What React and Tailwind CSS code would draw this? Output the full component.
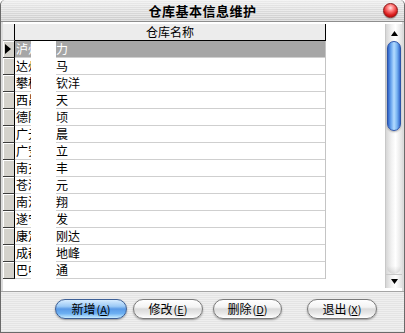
const rows = [
  ["泸州", "力"],
  ["达州", "马"],
  ["攀枝", "钦洋"],
  ["西昌", "天"],
  ["德阳", "顷"],
  ["广元", "晨"],
  ["广安", "立"],
  ["南充", "丰"],
  ["苍溪", "元"],
  ["南江", "翔"],
  ["遂宁", "发"],
  ["康定", "刚达"],
  ["成都", "地峰"],
  ["巴中", "通"],
];

function Btn({ label, k, blue, cls }) {
  return (
    <div
      className={
        "h-[20px] rounded-full border flex items-center justify-center text-[12px] leading-none text-black shadow-[0_1px_2px_rgba(0,0,0,0.35)] " +
        (blue
          ? "border-[#3d5f95] [background:linear-gradient(to_bottom,#d6ecff_0%,#9ccaf6_35%,#5a9ae6_50%,#6db0f2_75%,#c8ecff_100%)] "
          : "border-[#7a7a7a] [background:linear-gradient(to_bottom,#ffffff_0%,#f3f3f3_40%,#dadada_50%,#e9e9e9_75%,#ffffff_100%)] ") +
        cls
      }
    >
      <span>{label}</span>
      <span className="text-[11px] ml-[1px]">
        (<span className="underline">{k}</span>)
      </span>
    </div>
  );
}

export default function App() {
  return (
    <div className="w-[405px] h-[333px] overflow-hidden flex flex-col bg-[#e4e4e4] border-x border-b border-[#6a6a6a] rounded-t-[5px] [font-family:'Noto_Sans_CJK_SC','Noto_Sans',sans-serif]">
      {/* Title bar */}
      <div className="h-[22px] shrink-0 grid grid-cols-[1fr_auto_1fr] items-center border-b border-[#8e8e8e] rounded-t-[5px] [background:repeating-linear-gradient(to_bottom,rgba(255,255,255,0.45)_0px,rgba(255,255,255,0.45)_1px,transparent_1px,transparent_2px),linear-gradient(to_bottom,#ececec,#cbcbcb)]">
        <div />
        <div className="text-[13px] font-bold text-black leading-none tracking-[0.5px]">仓库基本信息维护</div>
        <div className="justify-self-end pr-[6px] flex items-center">
          <div className="w-[15px] h-[15px] rounded-full border border-[#8a1a1a] [background:radial-gradient(circle_at_50%_30%,#ffe0e0_0%,#ff7a7a_30%,#d81c1c_65%,#a00000_100%)] shadow-[0_1px_1px_rgba(0,0,0,0.3)]" />
        </div>
      </div>

      {/* Content */}
      <div className="h-[269px] shrink-0 flex">
        <div className="w-[2px] bg-[#dcdcdc]" />
        <div className="flex-1 bg-white flex flex-col pt-[2px]">
          {/* header */}
          <div className="h-[17px] flex shrink-0">
            <div className="w-[12px] border-r border-black bg-[#ececec] border-b border-b-[#9a9a9a]" />
            <div className="w-[311px] border-r border-black border-b bg-[#ececec] flex items-center justify-center text-[12px] leading-none text-black">
              仓库名称
            </div>
          </div>
          {rows.map((r, i) => {
            const sel = i === 0;
            return (
              <div key={i} className="h-[17px] flex shrink-0">
                <div className="w-[12px] border-r border-black border-b border-b-[#3c3c3c] bg-[#d4d2cc] shadow-[inset_1px_1px_0_#ffffff] flex items-center pl-[2px]">
                  {sel && (
                    <svg width="6" height="10" viewBox="0 0 6 10">
                      <path d="M0 0 L6 5 L0 10 Z" fill="#000" />
                    </svg>
                  )}
                </div>
                <div className="w-[311px] border-r border-[#c4c4c4] flex text-[12px] leading-none">
                  <div
                    className={
                      "w-[16px] overflow-hidden whitespace-nowrap pl-[1px] border-b border-[#cfcfcf] flex items-center " +
                      (sel ? "bg-[#a6a6a6] text-white" : "text-black")
                    }
                  >
                    {r[0]}
                  </div>
                  <div className="w-[25px] bg-white" />
                  <div
                    className={
                      "flex-1 whitespace-nowrap border-b border-[#cfcfcf] flex items-center " +
                      (sel ? "bg-[#a6a6a6] text-white" : "text-black")
                    }
                  >
                    {r[1]}
                  </div>
                </div>
              </div>
            );
          })}
          <div className="flex-1" />
        </div>
        {/* scrollbar */}
        <div className="w-[17px] flex flex-col pt-[2px] pb-[3px] bg-white">
          <div className="flex-1 flex flex-col border-l border-[#c8c8c8] [background:linear-gradient(to_right,#d6d6d6,#f2f2f2_35%,#ffffff_60%,#e2e2e2)]">
            <div className="h-[17px] flex items-center justify-center pt-[2px]">
              <svg width="7" height="5" viewBox="0 0 7 5">
                <path d="M3.5 0 L7 5 L0 5 Z" fill="#000" />
              </svg>
            </div>
            <div className="h-[90px] mx-[1px] rounded-full border border-[#2c54a8] [background:linear-gradient(to_right,#2f63c8,#6aa6ee_25%,#b4dcff_50%,#78b4f2_75%,#3468cc)] shadow-[0_1px_2px_rgba(0,0,0,0.3)]" />
            <div className="flex-1" />
            <div className="h-[8px] mx-[1px] rounded-b-full [background:linear-gradient(to_bottom,rgba(0,0,0,0),rgba(0,0,0,0.12))]" />
            <div className="h-[14px] flex items-center justify-center border-t border-[#c8c8c8]">
              <svg width="7" height="5" viewBox="0 0 7 5">
                <path d="M0 0 L7 0 L3.5 5 Z" fill="#000" />
              </svg>
            </div>
          </div>
        </div>
        <div className="w-[2px] bg-[#dcdcdc]" />
      </div>

      {/* Button panel */}
      <div className="flex-1 border-t border-[#a4a4a4] flex items-start pt-[7px] pl-[54px] [background:repeating-linear-gradient(to_bottom,#efefef_0px,#efefef_1px,#e4e4e4_1px,#e4e4e4_2px)]">
        <Btn label="新增" k="A" blue cls="w-[72px]" />
        <Btn label="修改" k="E" cls="w-[70px] ml-[6px]" />
        <Btn label="删除" k="D" cls="w-[69px] ml-[10px]" />
        <Btn label="退出" k="X" cls="w-[70px] ml-[25px]" />
      </div>
    </div>
  );
}
